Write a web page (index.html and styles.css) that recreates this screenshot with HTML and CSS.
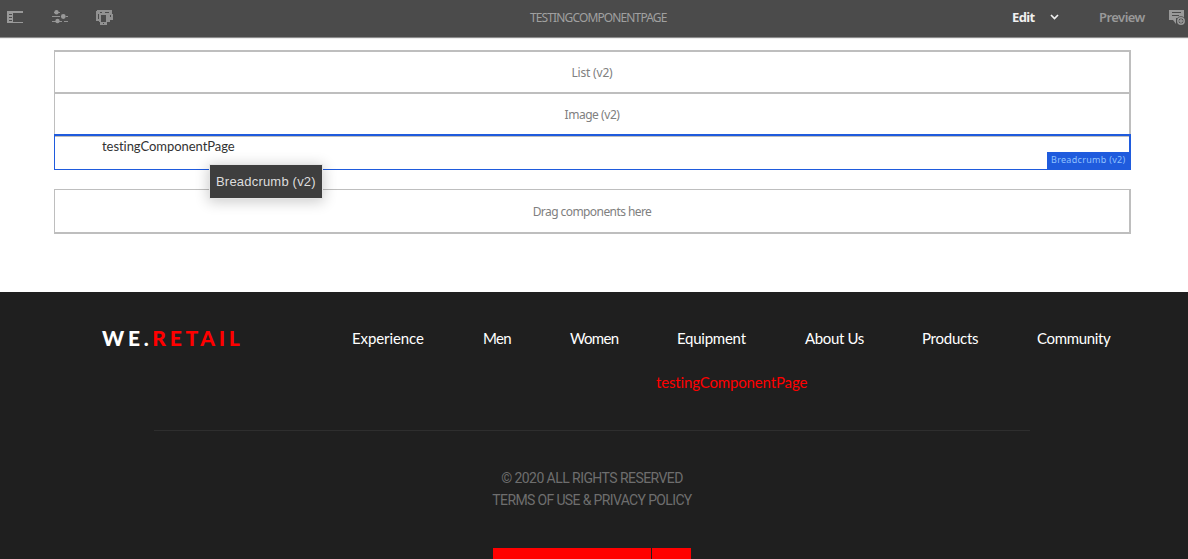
FILE: index.html
```
<!DOCTYPE html>
<html lang="en">
<head>
<meta charset="utf-8">
<title>testingComponentPage</title>
<link rel="stylesheet" href="styles.css">
</head>
<body>
<header class="toolbar">
  <div class="tools">
    <svg class="icon rail" width="17" height="13" viewBox="0 0 17 13"><path fill="#999" fill-rule="evenodd" d="M0 1h16v2H6v9h10v1H0zM2 4v1h3V4zM2 7v1h3V7zM2 10v1h3v-1z"/></svg>
    <svg class="icon sliders" width="17" height="14" viewBox="0 0 17 14"><path stroke="#929292" d="M0 6.500h8M14 6.500h2M0 11.500h10M12 11.500h4M2 2.500h6"/><g fill="#999"><circle cx="4.500" cy="2.200" r="2.200"/><circle cx="11.300" cy="6.500" r="2.400"/><circle cx="5.500" cy="11" r="2.200"/></g></svg>
    <svg class="icon devices" width="18" height="16" viewBox="0 0 18 16"><path fill="#919191" fill-rule="evenodd" d="M1 0h15v4h1v6h-3v2h-3v3H4v-3H3v-1H0V1h1zM2 4v5h1V4zM5 5v7h5V5zM14 5v2h1V5zM7 13v1h1v-1zM4 2v1h2V2zM9 2v1h4V2z"/></svg>
  </div>
  <h1 class="page-title">TESTINGCOMPONENTPAGE</h1>
  <div class="modes">
    <span class="mode-edit">Edit</span>
    <svg class="chevron" width="9" height="6" viewBox="0 0 9 6"><path fill="none" stroke="#f0f0f0" stroke-width="1.700" d="M1 1l3.500 3.500L8 1"/></svg>
    <span class="mode-preview">Preview</span>
    <svg class="annotate" width="17" height="16" viewBox="0 0 17 16"><path fill="#999" fill-rule="evenodd" d="M0 0h15v8H7v6l-3-4H0zM3 2v1h9V2zM3 5v1h7V5z"/><circle cx="12" cy="11" r="4.700" fill="#4b4b4b"/><circle cx="12" cy="11" r="3.200" fill="#4b4b4b" stroke="#999" stroke-width="1.500"/><path stroke="#999" stroke-width="1.400" d="M10 11h4M12 9v4"/></svg>
  </div>
</header>
<main class="content">
  <div class="slot slot-list"><span class="t-list">List (v2)</span></div>
  <div class="slot slot-image"><span class="t-image">Image (v2)</span></div>
  <div class="selected">
    <span class="crumb">testingComponentPage</span>
    <span class="badge"><span>Breadcrumb (v2)</span></span>
    <span class="tooltip"><span>Breadcrumb (v2)</span></span>
  </div>
  <div class="slot slot-drop"><span class="t-drop">Drag components here</span></div>
</main>
<footer class="footer">
  <div class="footer-top">
    <div class="brand">WE.<span class="brand-red">RETAIL</span></div>
    <nav class="nav">
      <a class="n1">Experience</a><a class="n2">Men</a><a class="n3">Women</a><a class="n4">Equipment</a><a class="n5">About Us</a><a class="n6">Products</a><a class="n7">Community</a>
    </nav>
  </div>
  <a class="current">testingComponentPage</a>
  <hr class="rule">
  <div class="legal">
    <span class="rights">© 2020 ALL RIGHTS RESERVED</span>
    <span class="terms">TERMS OF USE &amp; PRIVACY POLICY</span>
  </div>
  <div class="picker"><span class="picker-main"></span><span class="picker-toggle"></span></div>
</footer>
</body>
</html>
```
FILE: styles.css
```
* { box-sizing: border-box; }
body { margin: 0; height: 559px; overflow: hidden; background: #fff; font-family: Lato, sans-serif; font-variant-ligatures: none; white-space: nowrap; }
svg { display: block; flex: none; }

.toolbar { display: grid; grid-template-columns: 530px 470px 188px; height: 38px; background: #4b4b4b; border-bottom: 1px solid #8c8c8c; box-shadow: 0 1px 0 #ededed; font-family: "Noto Sans", sans-serif; }
.tools { display: flex; padding: 10px 0 0 7px; }
.sliders { margin-left: 28px; }
.devices { margin-left: 27px; }
.page-title { margin: 0; font-size: 12px; font-weight: 400; line-height: 35px; color: #a0a0a0; letter-spacing: -0.87px; }
.modes { display: flex; line-height: 34px; font-size: 13px; padding-left: 12px; }
.mode-edit { width: 38px; font-weight: 700; color: #f0f0f0; letter-spacing: -0.6px; }
.chevron { margin-top: 14px; }
.mode-preview { width: 70px; margin-left: 40px; font-weight: 600; color: #999; letter-spacing: -0.55px; }
.annotate { margin-top: 10px; }

.content { height: 254px; padding: 12px 57px 0 54px; }
.slot { display: flex; justify-content: center; align-items: center; border: solid #bebebe; font: 12px "Noto Sans", sans-serif; color: #808080; }
.slot-list { height: 42px; border-width: 2px 2px 0 1px; }
.slot-image { height: 42px; border-width: 2px 2px 0 1px; }
.slot-drop { height: 45px; margin-top: 19px; border-width: 1px 2px 2px 1px; }
.t-list { letter-spacing: -0.2px; }
.t-image { letter-spacing: -0.45px; }
.t-drop { letter-spacing: -0.57px; }
.selected { position: relative; height: 36px; border: solid #1f5bdd; border-width: 2px 2px 1px 1px; box-shadow: inset 0 1px 0 #bebebe; padding-left: 47px; }
.crumb { font-size: 13px; line-height: 20px; color: #333; display: block; letter-spacing: -0.05px; }
.badge { position: absolute; right: -2px; bottom: -1px; width: 84px; height: 18px; padding-left: 4px; background: #1f5bdd; color: #8fc1ff; font: 9px/16px "Noto Sans", sans-serif; letter-spacing: 0.3px; }
.tooltip { position: absolute; left: 155px; top: 29px; width: 112px; height: 33px; padding-left: 6px; background: #3e3e3e; color: #ddd; font: 13px/33px "Liberation Sans", sans-serif; letter-spacing: 0.2px; box-shadow: 0 0 0 1px #e4e4e4, 0 2px 14px 2px rgba(0,0,0,.2); }

.footer { height: 267px; background: #1f1f1f; display: flex; flex-direction: column; }
.footer-top { display: flex; height: 80px; padding: 34px 0 0 102px; }
.brand { width: 250px; font-size: 21px; line-height: 24px; font-weight: 900; color: #fff; letter-spacing: 3.7px; }
.brand-red { color: #f00; }
.nav { display: grid; grid-template-columns: 131px 87px 107px 128px 117px 115px 100px; font-size: 15px; line-height: 25px; color: #fff; letter-spacing: -0.35px; }
.n1 { letter-spacing: -0.1px; }
.n4, .n6 { letter-spacing: -0.25px; }
.n2, .n3 { letter-spacing: -0.7px; }
.current { padding-left: 656px; font-size: 15px; line-height: 21px; color: #f00; letter-spacing: -0.15px; }
.rule { width: 876px; height: 1px; margin: 37px 0 0 154px; border: 0; background: #2e2e2e; }
.legal { display: flex; flex-direction: column; align-items: center; width: 1184px; margin-top: 37px; font-family: Roboto, sans-serif; font-size: 14px; line-height: 21.500px; color: #6e6e6e; letter-spacing: -0.56px; }
.terms { letter-spacing: -0.64px; }
.picker { display: flex; gap: 1px; margin: 37px 0 0 493px; height: 11px; }
.picker-main { width: 158px; background: #f00; }
.picker-toggle { width: 39px; background: #f00; }
```
